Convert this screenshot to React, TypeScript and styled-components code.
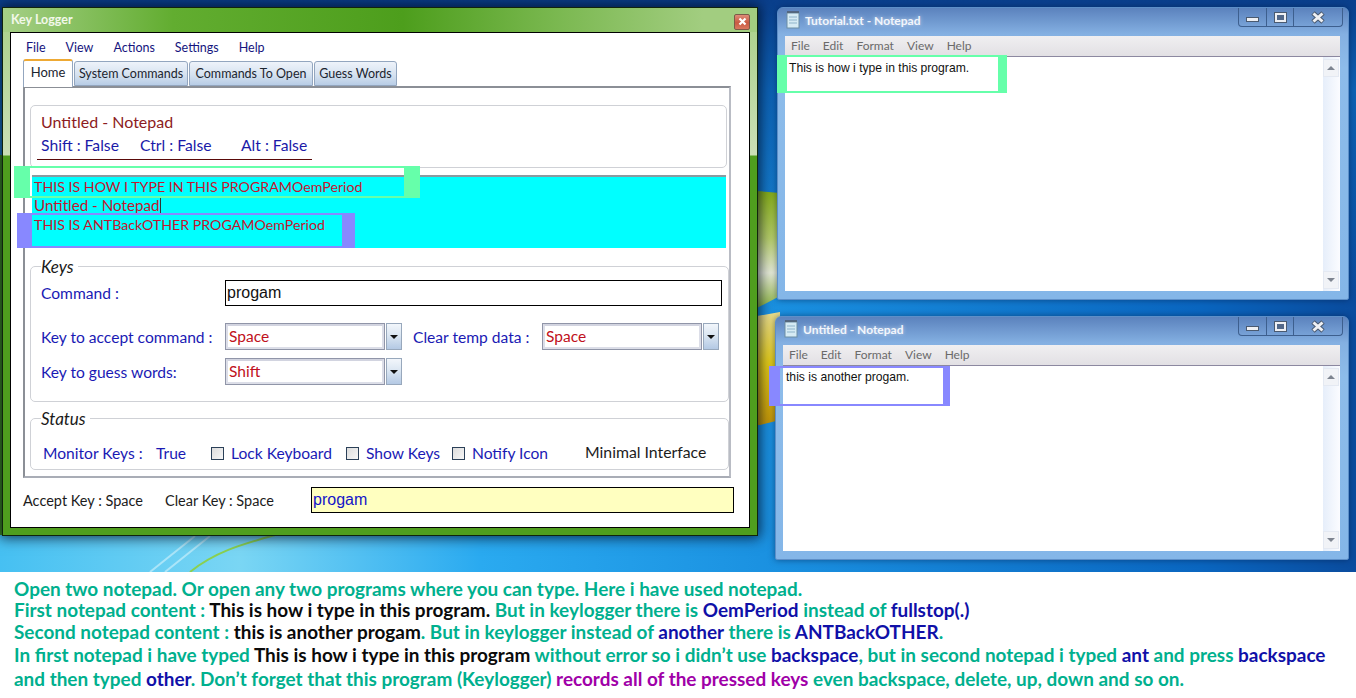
import React from 'react';
import styled, { createGlobalStyle } from 'styled-components';

const GlobalStyle = createGlobalStyle`
  html, body {
    margin: 0;
    padding: 0;
    background: #fff;
  }
  body {
    font-family: Lato, "Noto Sans", sans-serif;
  }
`;

const Page = styled.div`
  width: 1356px;
  height: 698px;
  overflow: hidden;
`;

const Desktop = styled.div`
  position: relative;
  width: 1356px;
  height: 572px;
  overflow: hidden;
  background:
    linear-gradient(180deg, #0a3f8c 0px, #0d62b4 90px, rgba(20, 130, 215, 0) 300px),
    linear-gradient(90deg, #46c0f2 0px, #7ad6f4 240px, #2aaaf0 480px, #1a90e0 780px, #0a66c0 1200px, #0a4c9e 1356px);
`;

const Wallpaper = styled.svg`
  position: absolute;
  left: 0;
  top: 0;
`;

/* key logger window */
const LoggerWindow = styled.div`
  position: absolute;
  left: 2px;
  top: 7px;
  box-sizing: border-box;
  width: 756px;
  height: 529px;
  display: flex;
  flex-direction: column;
  padding: 0 7px 7px 7px;
  border: 1px solid #10240c;
  box-shadow: 0 0 12px 2px rgba(0, 10, 30, 0.75);
  background: linear-gradient(180deg, #a8d088 0px, #cadfb6 147px, #4f9e1e 148px, #4f9e1e 100%);
`;

const LoggerTitleBar = styled.div`
  flex: none;
  height: 24px;
  margin: 0 -7px;
  padding: 0 7px 0 8px;
  display: flex;
  align-items: center;
  justify-content: space-between;
  background: linear-gradient(90deg, #a5cf86 0px, #62ad30 170px, #4d9e1c 400px, #7cb952 560px, #a2cd80 700px);
`;

const LoggerTitle = styled.span`
  font-size: 12.5px;
  font-weight: 700;
  margin-top: -2px;
  color: #f2f8ea;
`;

const CloseButton = styled.div`
  width: 16px;
  height: 16px;
  margin-top: 3px;
  box-sizing: border-box;
  border: 1px solid #7d5a48;
  border-radius: 2px;
  background: linear-gradient(180deg, #de8c78, #c95a42 55%, #d9785e);
  display: flex;
  align-items: center;
  justify-content: center;
`;

const LoggerBody = styled.div`
  flex: 1;
  box-sizing: border-box;
  display: flex;
  flex-direction: column;
  border: 1px solid #000;
  background: #fff;
  padding: 0 15px 0 12px;
`;

const MenuBar = styled.div`
  flex: none;
  box-sizing: border-box;
  height: 26px;
  display: flex;
  align-items: center;
  padding: 2px 0 0 3px;
  gap: 20px;
  font-size: 12.5px;
  color: #15157e;
`;

const TabRow = styled.div`
  flex: none;
  height: 27px;
  display: flex;
  align-items: flex-end;
  gap: 1px;
`;

const Tab = styled.div<{ $active?: boolean; $width: number }>`
  box-sizing: border-box;
  width: ${(p) => p.$width}px;
  height: ${(p) => (p.$active ? 28 : 25)}px;
  margin-bottom: ${(p) => (p.$active ? -1 : 0)}px;
  padding-bottom: ${(p) => (p.$active ? 4 : 0)}px;
  display: flex;
  align-items: center;
  justify-content: center;
  position: relative;
  font-size: ${(p) => (p.$active ? 13 : 12.5)}px;
  color: #1c2530;
  border: 1px solid #93a6bf;
  border-bottom: ${(p) => (p.$active ? 'none' : '1px solid #93a6bf')};
  border-top: ${(p) => (p.$active ? '2px solid #eea934' : '1px solid #93a6bf')};
  border-radius: 3px 3px 0 0;
  background: ${(p) => (p.$active ? '#fff' : 'linear-gradient(180deg, #eef3fa, #d6e2f0 55%, #b8cde6)')};
`;

const TabPanel = styled.div`
  flex: none;
  box-sizing: border-box;
  width: 708px;
  height: 392px;
  padding: 17px 3px 0 5px;
  border-top: 2px solid #8b8f96;
  border-left: 2px solid #8b8f96;
  border-right: 2px solid #b9bcc4;
  border-bottom: 2px solid #a9adb6;
`;

const InfoGroup = styled.div`
  box-sizing: border-box;
  width: 697px;
  height: 63px;
  padding: 6px 0 0 10px;
  border: 1px solid #cfd1d6;
  border-radius: 5px;
`;

const WindowName = styled.div`
  font-size: 16px;
  line-height: 19px;
  color: #8c1c22;
`;

const ModifierRow = styled.div`
  display: flex;
  width: 275px;
  margin: 5px 0 0 -4px;
  padding: 0 0 4px 4px;
  box-sizing: border-box;
  border-bottom: 1px solid #5a0a0a;
  font-size: 15.7px;
  line-height: 19px;
  color: #1a1aa8;
`;

const Modifier = styled.span<{ $width: number }>`
  flex: none;
  width: ${(p) => p.$width}px;
`;

const LogBox = styled.div`
  box-sizing: border-box;
  width: 694px;
  height: 73px;
  margin: 7px 0 0 2px;
  padding: 0 2px;
  border-top: 2px solid #8a9aa0;
  background: #00ffff;
  color: #c4142e;
`;

const LogLine = styled.div<{ $size: number }>`
  font-size: ${(p) => p.$size}px;
  line-height: 19px;
  white-space: nowrap;
`;

const Caret = styled.span`
  display: inline-block;
  width: 1px;
  height: 17px;
  margin-left: 1px;
  vertical-align: -3px;
  background: #333;
`;

const Group = styled.fieldset<{ $height: number; $gap: number }>`
  box-sizing: border-box;
  display: block;
  width: 699px;
  height: ${(p) => p.$height}px;
  margin: ${(p) => p.$gap}px 0 0 0;
  padding: 0 0 0 10px;
  border: 1px solid #cfd1d6;
  border-radius: 5px;
  min-width: 0;
`;

const GroupTitle = styled.legend`
  margin-left: 0;
  padding: 0 4px 0 0;
  font-size: 17px;
  line-height: 19px;
  font-style: italic;
  color: #1a1a1a;
`;

const FormRow = styled.div<{ $height: number; $top: number }>`
  display: flex;
  align-items: center;
  height: ${(p) => p.$height}px;
  margin-top: ${(p) => p.$top}px;
`;

const FieldLabel = styled.span<{ $width: number; $pad?: number }>`
  flex: none;
  box-sizing: border-box;
  width: ${(p) => p.$width}px;
  padding-left: ${(p) => p.$pad ?? 0}px;
  font-size: 15.6px;
  color: #1a1ab4;
`;

const CommandInput = styled.div`
  box-sizing: border-box;
  width: 497px;
  height: 26px;
  padding-left: 1px;
  border: 1px solid #000;
  font-family: "Liberation Sans", Arial, sans-serif;
  font-size: 16px;
  line-height: 24px;
  color: #111;
`;

const Combo = styled.div`
  flex: none;
  display: flex;
  gap: 1px;
  width: 177px;
  height: 27px;
`;

const ComboValue = styled.div`
  flex: 1;
  box-sizing: border-box;
  padding-left: 1px;
  border: 3px solid #dcdee8;
  border-top-color: #d2d4e0;
  outline: 1px solid #9095a8;
  outline-offset: -1px;
  font-size: 15.5px;
  line-height: 21px;
  color: #c01020;
`;

const ComboButton = styled.div`
  flex: none;
  box-sizing: border-box;
  width: 16px;
  border: 1px solid #98a8bc;
  background: linear-gradient(180deg, #f2f6fb, #dbe6f2 45%, #b4c9e4);
  display: flex;
  align-items: center;
  justify-content: center;
`;

const ComboArrow = styled.span`
  width: 0;
  height: 0;
  border-left: 4px solid transparent;
  border-right: 4px solid transparent;
  border-top: 4px solid #111;
`;

const StatusRow = styled.div`
  display: flex;
  align-items: center;
  height: 20px;
  margin: 15px 0 0 2px;
  font-size: 15.6px;
  color: #1a1ab4;
`;

const StatusText = styled.span<{ $width: number }>`
  flex: none;
  width: ${(p) => p.$width}px;
`;

const CheckBox = styled.span`
  flex: none;
  box-sizing: border-box;
  width: 13px;
  height: 13px;
  margin-right: 7px;
  border: 1px solid #2b4058;
  background: linear-gradient(135deg, #dcdcdc, #f6f6f6);
`;

const PlainText = styled.span`
  flex: none;
  margin: -4px 0 0 0;
  color: #1c1c1c;
  font-size: 15.8px;
`;

const StatusLine = styled.div`
  flex: none;
  display: flex;
  align-items: center;
  height: 26px;
  margin: 9px 0 0 0;
  font-size: 14.5px;
  color: #1c1c1c;
`;

const StatusValue = styled.span<{ $width: number }>`
  flex: none;
  width: ${(p) => p.$width}px;
`;

const ResultInput = styled.div`
  flex: none;
  box-sizing: border-box;
  width: 423px;
  height: 26px;
  padding-left: 1px;
  border: 1px solid #000;
  background: #ffffc0;
  font-family: "Liberation Sans", Arial, sans-serif;
  font-size: 16px;
  line-height: 24px;
  color: #1414c8;
`;

/* notepad windows */
const Notepad = styled.div<{ $x: number; $y: number; $w: number; $h: number }>`
  position: absolute;
  left: ${(p) => p.$x}px;
  top: ${(p) => p.$y}px;
  box-sizing: border-box;
  width: ${(p) => p.$w}px;
  height: ${(p) => p.$h}px;
  display: flex;
  flex-direction: column;
  padding: 0 8px 8px 7px;
  border: 1px solid #5d8fc8;
  border-radius: 6px 6px 2px 2px;
  box-shadow: 0 0 6px rgba(0, 20, 60, 0.5);
  background: linear-gradient(180deg, #5b82bd 0px, #84b0e2 26px, #8dbcea 60px, #84b6e8 100%);
`;

const NotepadTitleBar = styled.div`
  flex: none;
  position: relative;
  box-sizing: border-box;
  height: 28px;
  padding-bottom: 4px;
  display: flex;
  align-items: center;
  gap: 4px;
`;

const NotepadTitle = styled.span`
  font-size: 12px;
  font-weight: 700;
  color: #f2f6fc;
  text-shadow: 0 0 4px rgba(255, 255, 255, 0.6);
`;

const CaptionButtons = styled.div`
  position: absolute;
  right: -3px;
  top: 0;
  display: flex;
  height: 18px;
  border: 1px solid #3d5f8e;
  border-top: none;
  border-radius: 0 0 4px 4px;
`;

const CaptionButton = styled.div<{ $width: number; $end?: boolean }>`
  box-sizing: border-box;
  width: ${(p) => p.$width}px;
  border-right: ${(p) => (p.$end ? 'none' : '1px solid #3d5f8e')};
  display: flex;
  align-items: center;
  justify-content: center;
`;

const MinimizeGlyph = styled.span`
  width: 11px;
  height: 3px;
  margin-top: 4px;
  background: #eef0f4;
  border: 1px solid #4a5a70;
`;

const MaximizeGlyph = styled.span`
  box-sizing: border-box;
  width: 11px;
  height: 9px;
  border: 2px solid #eef0f4;
  outline: 1px solid #4a5a70;
  background: #52688a;
`;

const NotepadMenu = styled.div`
  flex: none;
  box-sizing: border-box;
  height: 21px;
  padding: 0 0 2px 6px;
  display: flex;
  align-items: center;
  gap: 13px;
  font-size: 12px;
  color: #6a6a6a;
  background: linear-gradient(180deg, #f0eff1, #e2e0e4);
  border-bottom: 1px solid #8c88a0;
`;

const NotepadContent = styled.div`
  flex: 1;
  min-height: 0;
  display: flex;
  background: #fff;
`;

const NotepadText = styled.div<{ $left: number }>`
  flex: 1;
  padding: 4px 0 0 ${(p) => p.$left}px;
  font-family: "Liberation Sans", Arial, sans-serif;
  font-size: 12.15px;
  line-height: 15px;
  color: #111;
`;

const ScrollBar = styled.div`
  flex: none;
  width: 17px;
  display: flex;
  flex-direction: column;
  justify-content: space-between;
  padding: 2px 1px 2px 0;
  box-sizing: border-box;
  background: linear-gradient(90deg, #e6eefa, #fbfcff);
`;

const ScrollButton = styled.div`
  height: 16px;
  border: 1px solid #e4e9f2;
  background: #f1f3f7;
  display: flex;
  align-items: center;
  justify-content: center;
`;

const ScrollArrow = styled.span<{ $down?: boolean }>`
  width: 0;
  height: 0;
  border-left: 4px solid transparent;
  border-right: 4px solid transparent;
  ${(p) => (p.$down ? 'border-top: 4px solid #7d8490;' : 'border-bottom: 4px solid #7d8490;')}
`;

/* marker boxes laid over the screenshot */
const Marker = styled.div<{ $x: number; $y: number; $w: number; $h: number; $l: number; $r: number; $c: string }>`
  position: absolute;
  box-sizing: border-box;
  left: ${(p) => p.$x}px;
  top: ${(p) => p.$y}px;
  width: ${(p) => p.$w}px;
  height: ${(p) => p.$h}px;
  border: 2px solid ${(p) => p.$c};
  border-left-width: ${(p) => p.$l}px;
  border-right-width: ${(p) => p.$r}px;
`;

/* explanation text */
const Notes = styled.div`
  box-sizing: border-box;
  height: 126px;
  padding: 6px 0 0 14px;
  font-size: 18.95px;
  font-weight: 700;
  line-height: 22px;
  color: #00b08e;
  white-space: nowrap;
`;

const NoteLine = styled.div<{ $gap: number }>`
  margin-top: ${(p) => p.$gap}px;
`;

const Ink = styled.span`
  color: #0a0a0a;
`;

const Term = styled.span`
  color: #1010a8;
`;

const Loud = styled.span`
  color: #a000a8;
`;

const NotepadIcon = () => (
  <svg width="16" height="18" viewBox="0 0 16 18">
    <rect x="2" y="2" width="12" height="15" fill="#d6ebf4" stroke="#6d8ea4" />
    <path d="M4 6h8M4 9h8M4 12h8" stroke="#8fb4ca" />
    <path d="M3 2V0M5 2V0M7 2V0M9 2V0M11 2V0M13 2V0" stroke="#444" />
  </svg>
);

const CloseGlyph = () => (
  <svg width="19" height="13" viewBox="0 0 19 13">
    <path d="M4 2l10 9M14 2L4 11" stroke="#4a5a70" strokeWidth="5" />
    <path d="M4.5 2.5l9 8M13.5 2.5l-9 8" stroke="#eef0f4" strokeWidth="3" />
  </svg>
);

const NotepadWindow: React.FC<{
  x: number;
  y: number;
  w: number;
  h: number;
  title: string;
  text: string;
  textLeft: number;
}> = ({ x, y, w, h, title, text, textLeft }) => (
  <Notepad $x={x} $y={y} $w={w} $h={h}>
    <NotepadTitleBar>
      <NotepadIcon />
      <NotepadTitle>{title}</NotepadTitle>
      <CaptionButtons>
        <CaptionButton $width={28}>
          <MinimizeGlyph />
        </CaptionButton>
        <CaptionButton $width={27}>
          <MaximizeGlyph />
        </CaptionButton>
        <CaptionButton $width={48} $end>
          <CloseGlyph />
        </CaptionButton>
      </CaptionButtons>
    </NotepadTitleBar>
    <NotepadMenu>
      <span>File</span>
      <span>Edit</span>
      <span>Format</span>
      <span>View</span>
      <span>Help</span>
    </NotepadMenu>
    <NotepadContent>
      <NotepadText $left={textLeft}>{text}</NotepadText>
      <ScrollBar>
        <ScrollButton>
          <ScrollArrow />
        </ScrollButton>
        <ScrollButton>
          <ScrollArrow $down />
        </ScrollButton>
      </ScrollBar>
    </NotepadContent>
  </Notepad>
);

const KeyCombo: React.FC<{ value: string }> = ({ value }) => (
  <Combo>
    <ComboValue>{value}</ComboValue>
    <ComboButton>
      <ComboArrow />
    </ComboButton>
  </Combo>
);

const App: React.FC = () => (
  <Page>
    <GlobalStyle />
    <Desktop>
      <Wallpaper width="1356" height="572" viewBox="0 0 1356 572">
        <defs>
          <linearGradient id="leaf" x1="0" y1="0" x2="0" y2="1">
            <stop offset="0" stopColor="#84ac18" />
            <stop offset="0.4" stopColor="#b4cc68" />
            <stop offset="0.7" stopColor="#e6ebd8" />
            <stop offset="1" stopColor="#8cb440" />
          </linearGradient>
          <linearGradient id="sun" x1="0" y1="0" x2="0" y2="1">
            <stop offset="0" stopColor="#ecdf90" />
            <stop offset="0.45" stopColor="#e4cc18" />
            <stop offset="1" stopColor="#c49608" />
          </linearGradient>
        </defs>
        <rect x="0" y="155" width="2" height="380" fill="#3f8a1c" />
        <path d="M757 191 L780 193 L780 296 L757 308 Z" fill="url(#leaf)" />
        <path d="M757 316 L780 312 L780 420 L760 425 L757 425 Z" fill="url(#sun)" />
        <path d="M190 572 C 215 552 240 545 275 535" stroke="#8ad050" strokeWidth="2" fill="none" />
        <path d="M150 572 L195 536 M165 572 L210 536" stroke="#d6f4fc" strokeWidth="2" opacity="0.6" fill="none" />
      </Wallpaper>

      <LoggerWindow>
        <LoggerTitleBar>
          <LoggerTitle>Key Logger</LoggerTitle>
          <CloseButton>
            <svg width="9" height="9" viewBox="0 0 9 9">
              <path d="M1.5 1.5l6 6M7.5 1.5l-6 6" stroke="#fff" strokeWidth="2.2" />
            </svg>
          </CloseButton>
        </LoggerTitleBar>
        <LoggerBody>
          <MenuBar>
            <span>File</span>
            <span>View</span>
            <span>Actions</span>
            <span>Settings</span>
            <span>Help</span>
          </MenuBar>
          <TabRow>
            <Tab $active $width={50}>Home</Tab>
            <Tab $width={114}>System Commands</Tab>
            <Tab $width={124}>Commands To Open</Tab>
            <Tab $width={83}>Guess Words</Tab>
          </TabRow>
          <TabPanel>
            <InfoGroup>
              <WindowName>Untitled - Notepad</WindowName>
              <ModifierRow>
                <Modifier $width={99}>Shift : False</Modifier>
                <Modifier $width={101}>Ctrl : False</Modifier>
                <Modifier $width={71}>Alt : False</Modifier>
              </ModifierRow>
            </InfoGroup>
            <LogBox>
              <LogLine $size={14.2}>THIS IS HOW I TYPE IN THIS PROGRAMOemPeriod</LogLine>
              <LogLine $size={15.2}>
                Untitled - Notepad
                <Caret />
              </LogLine>
              <LogLine $size={14.2}>THIS IS ANTBackOTHER PROGAMOemPeriod</LogLine>
            </LogBox>
            <Group $height={145} $gap={9}>
              <GroupTitle>Keys</GroupTitle>
              <FormRow $height={26} $top={4}>
                <FieldLabel $width={184}>Command :</FieldLabel>
                <CommandInput>progam</CommandInput>
              </FormRow>
              <FormRow $height={27} $top={17}>
                <FieldLabel $width={184}>Key to accept command :</FieldLabel>
                <KeyCombo value="Space" />
                <FieldLabel $width={140} $pad={11}>Clear temp data :</FieldLabel>
                <KeyCombo value="Space" />
              </FormRow>
              <FormRow $height={27} $top={8}>
                <FieldLabel $width={184}>Key to guess words:</FieldLabel>
                <KeyCombo value="Shift" />
              </FormRow>
            </Group>
            <Group $height={61} $gap={7}>
              <GroupTitle>Status</GroupTitle>
              <StatusRow>
                <StatusText $width={113}>Monitor Keys :</StatusText>
                <StatusText $width={55}>True</StatusText>
                <CheckBox />
                <StatusText $width={115}>Lock Keyboard</StatusText>
                <CheckBox />
                <StatusText $width={86}>Show Keys</StatusText>
                <CheckBox />
                <StatusText $width={113}>Notify Icon</StatusText>
                <PlainText>Minimal Interface</PlainText>
              </StatusRow>
            </Group>
          </TabPanel>
          <StatusLine>
            <StatusValue $width={142}>Accept Key : Space</StatusValue>
            <StatusValue $width={146}>Clear Key : Space</StatusValue>
            <ResultInput>progam</ResultInput>
          </StatusLine>
        </LoggerBody>
      </LoggerWindow>

      <NotepadWindow x={777} y={7} w={572} h={293} title="Tutorial.txt - Notepad" text="This is how i type in this program." textLeft={4} />
      <NotepadWindow x={775} y={316} w={574} h={244} title="Untitled - Notepad" text="this is another progam." textLeft={3} />

      <Marker $x={14} $y={166} $w={406} $h={32} $l={16} $r={16} $c="#66ffaa" />
      <Marker $x={17} $y={213} $w={338} $h={35} $l={15} $r={13} $c="#8888ff" />
      <Marker $x={777} $y={55} $w={230} $h={38} $l={10} $r={9} $c="#66ffaa" />
      <Marker $x={769} $y={366} $w={181} $h={40} $l={11} $r={7} $c="#8888ff" />
    </Desktop>
    <Notes>
      <NoteLine $gap={0}>Open two notepad. Or open any two programs where you can type. Here i have used notepad.</NoteLine>
      <NoteLine $gap={-1}>
        First notepad content : <Ink>This is how i type in this program.</Ink> But in keylogger there is <Term>OemPeriod</Term> instead of <Term>fullstop(.)</Term>
      </NoteLine>
      <NoteLine $gap={0}>
        Second notepad content : <Ink>this is another progam</Ink>. But in keylogger instead of <Term>another</Term> there is <Term>ANTBackOTHER</Term>.
      </NoteLine>
      <NoteLine $gap={1}>
        In first notepad i have typed <Ink>This is how i type in this program</Ink> without error so i didn’t use <Term>backspace</Term>, but in second notepad i typed <Term>ant</Term> and press <Term>backspace</Term>
      </NoteLine>
      <NoteLine $gap={2}>
        and then typed <Term>other</Term>. Don’t forget that this program (Keylogger) <Loud>records all of the pressed keys</Loud> even backspace, delete, up, down and so on.
      </NoteLine>
    </Notes>
  </Page>
);

export default App;
